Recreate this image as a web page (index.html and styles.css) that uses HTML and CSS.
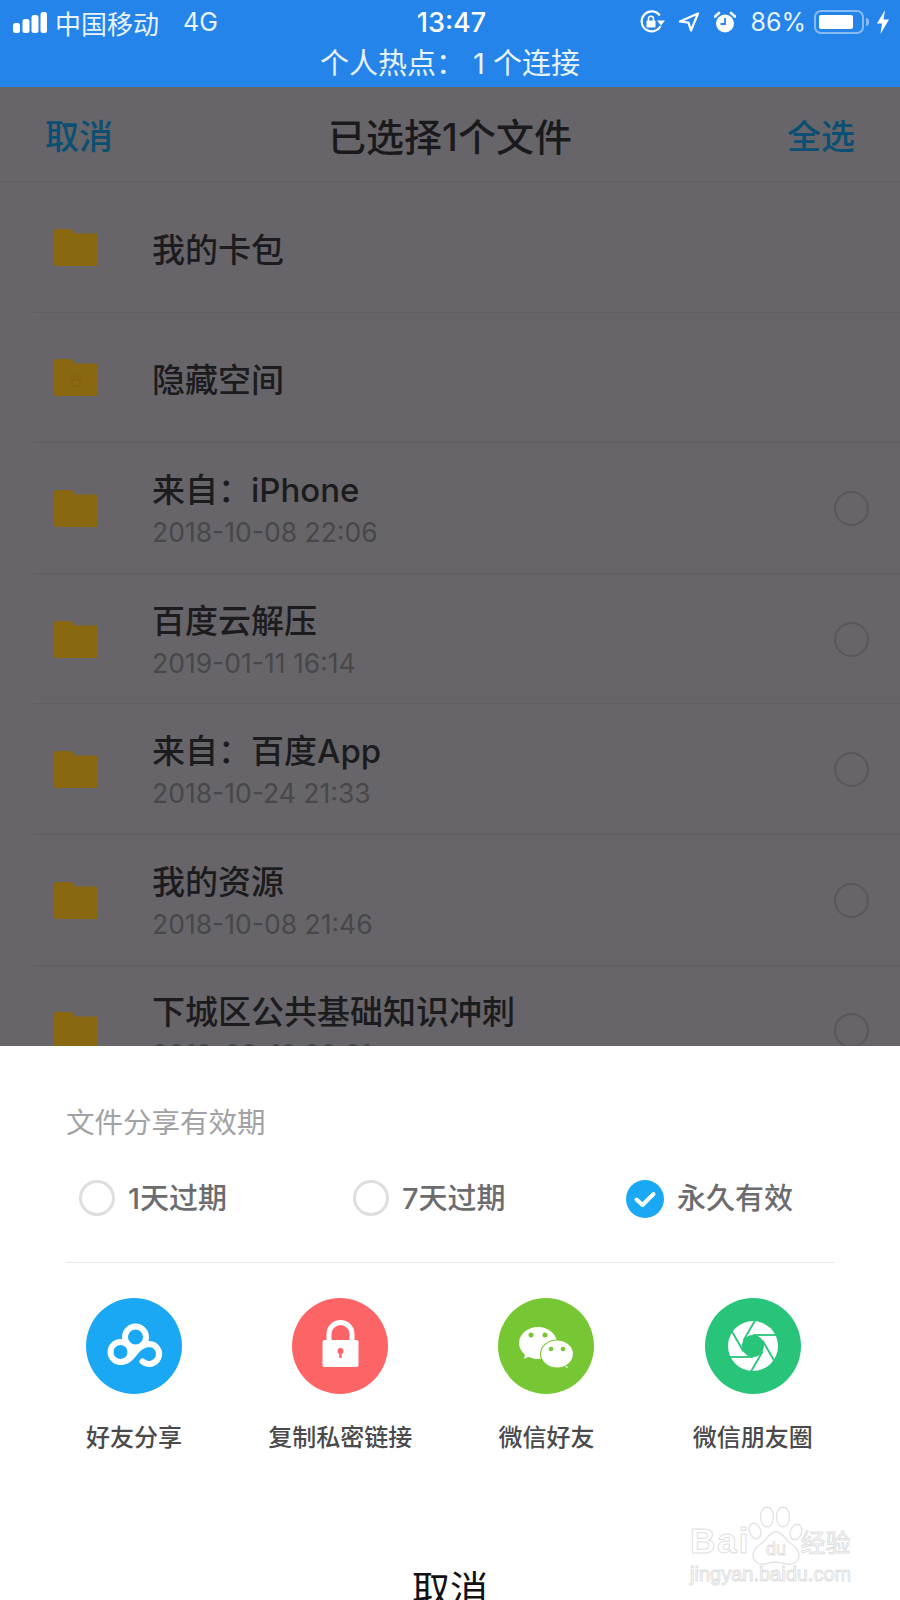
FILE: index.html
```html
<!DOCTYPE html>
<html lang="zh-CN">
<head>
  <meta charset="UTF-8" />
  <meta name="viewport" content="width=device-width, initial-scale=1.0"/>
  <title>已选择1个文件</title>
  <link rel="stylesheet" href="styles.css">
</head>
<body>
<div class="phone">
  <header class="topbar">
    <div class="status">
      <div class="status-left">
        <svg class="signal" width="34" height="22" viewBox="0 0 34 22"><rect x="0" y="12" width="7" height="10" rx="2.5"/><rect x="9.500" y="8" width="7" height="14" rx="2.500"/><rect x="18.500" y="4" width="7" height="18" rx="2.500"/><rect x="27.500" y="1" width="6.500" height="21" rx="2.500"/></svg>
        <span class="carrier">中国移动</span>
        <span class="net">4G</span>
      </div>
      <div class="clock">13:47</div>
      <div class="status-right">
        <svg class="ico-rot" width="27" height="24" viewBox="0 0 27 24"><path d="M20.800 5.500A10 10 0 1 0 21.500 16" fill="none" stroke="#fff" stroke-width="2.200"/><path d="M18 10.500h8l-4 5z" fill="#fff"/><rect x="7.500" y="10.500" width="9" height="7" rx="1" fill="#fff"/><path d="M9.500 11V8.800a2.500 2.500 0 0 1 5 0V11" fill="none" stroke="#fff" stroke-width="1.600"/></svg>
        <svg class="ico-loc" width="22" height="20" viewBox="0 0 22 20"><path d="M20 1.500 2 9.500l8.500 1.200L13 18.500z" fill="none" stroke="#fff" stroke-width="2.200" stroke-linejoin="round"/></svg>
        <svg class="ico-alarm" width="22" height="22" viewBox="0 0 22 22"><circle cx="11" cy="12.500" r="9" fill="#fff"/><path d="M1 5.500 5 2M21 5.500 17 2" stroke="#fff" stroke-width="2.600" stroke-linecap="round"/><path d="M11 7v6H6.500" fill="none" stroke="#2584ea" stroke-width="1.800"/></svg>
        <span class="pct">86%</span>
        <div class="battery"><div class="battery-fill"></div></div>
        <div class="battery-nub"></div>
        <svg class="ico-bolt" width="14" height="24" viewBox="0 0 14 24"><path d="M9 0 1 13.500h5L4.500 24 13 9.500H7.500z" fill="#fff"/></svg>
      </div>
    </div>
    <div class="hotspot">个人热点： 1 个连接</div>
  </header>

  <nav class="navbar">
    <span class="nav-link">取消</span>
    <span class="nav-title">已选择1个文件</span>
    <span class="nav-link">全选</span>
  </nav>

  <ul class="files">
    <li class="file">
      <svg class="folder" width="44" height="37" viewBox="0 0 44 37"><path d="M2 0h13c3 0 5 2 6 4.500h21a2 2 0 0 1 2 2V35a2 2 0 0 1-2 2H2a2 2 0 0 1-2-2V2a2 2 0 0 1 2-2z"/></svg>
      <div class="file-text"><div class="file-name">我的卡包</div></div>
    </li>
    <li class="file">
      <svg class="folder" width="44" height="37" viewBox="0 0 44 37"><path d="M2 0h13c3 0 5 2 6 4.500h21a2 2 0 0 1 2 2V35a2 2 0 0 1-2 2H2a2 2 0 0 1-2-2V2a2 2 0 0 1 2-2z"/><path d="M18 27v-6h8v6zM19.800 21v-2a2.200 2.200 0 0 1 4.400 0v2" fill="none" stroke="#85610f" stroke-width="1.600"/></svg>
      <div class="file-text"><div class="file-name">隐藏空间</div></div>
    </li>
    <li class="file">
      <svg class="folder" width="44" height="37" viewBox="0 0 44 37"><path d="M2 0h13c3 0 5 2 6 4.500h21a2 2 0 0 1 2 2V35a2 2 0 0 1-2 2H2a2 2 0 0 1-2-2V2a2 2 0 0 1 2-2z"/></svg>
      <div class="file-text"><div class="file-name">来自：iPhone</div><div class="file-date">2018-10-08 22:06</div></div>
      <div class="file-radio"></div>
    </li>
    <li class="file">
      <svg class="folder" width="44" height="37" viewBox="0 0 44 37"><path d="M2 0h13c3 0 5 2 6 4.500h21a2 2 0 0 1 2 2V35a2 2 0 0 1-2 2H2a2 2 0 0 1-2-2V2a2 2 0 0 1 2-2z"/></svg>
      <div class="file-text"><div class="file-name">百度云解压</div><div class="file-date">2019-01-11 16:14</div></div>
      <div class="file-radio"></div>
    </li>
    <li class="file">
      <svg class="folder" width="44" height="37" viewBox="0 0 44 37"><path d="M2 0h13c3 0 5 2 6 4.500h21a2 2 0 0 1 2 2V35a2 2 0 0 1-2 2H2a2 2 0 0 1-2-2V2a2 2 0 0 1 2-2z"/></svg>
      <div class="file-text"><div class="file-name">来自：百度App</div><div class="file-date">2018-10-24 21:33</div></div>
      <div class="file-radio"></div>
    </li>
    <li class="file">
      <svg class="folder" width="44" height="37" viewBox="0 0 44 37"><path d="M2 0h13c3 0 5 2 6 4.500h21a2 2 0 0 1 2 2V35a2 2 0 0 1-2 2H2a2 2 0 0 1-2-2V2a2 2 0 0 1 2-2z"/></svg>
      <div class="file-text"><div class="file-name">我的资源</div><div class="file-date">2018-10-08 21:46</div></div>
      <div class="file-radio"></div>
    </li>
    <li class="file">
      <svg class="folder" width="44" height="37" viewBox="0 0 44 37"><path d="M2 0h13c3 0 5 2 6 4.500h21a2 2 0 0 1 2 2V35a2 2 0 0 1-2 2H2a2 2 0 0 1-2-2V2a2 2 0 0 1 2-2z"/></svg>
      <div class="file-text"><div class="file-name">下城区公共基础知识冲刺</div><div class="file-date">2018-09-12 20:31</div></div>
      <div class="file-radio"></div>
    </li>
  </ul>

  <section class="sheet">
    <div class="sheet-title">文件分享有效期</div>
    <div class="options">
      <div class="option"><span class="opt-radio"></span><span>1天过期</span></div>
      <div class="option"><span class="opt-radio"></span><span>7天过期</span></div>
      <div class="option">
        <svg width="38" height="38" viewBox="0 0 38 38"><circle cx="19" cy="19" r="19" fill="#1aa7f4"/><path d="M10.500 19.500 16.500 25 27.500 14" fill="none" stroke="#fff" stroke-width="4" stroke-linecap="round" stroke-linejoin="round"/></svg>
        <span>永久有效</span>
      </div>
    </div>
    <div class="share">
      <div class="share-item">
        <svg width="96" height="96" viewBox="0 0 96 96"><circle cx="48" cy="48" r="48" fill="#1aa7f4"/><g fill="none" stroke="#fff" stroke-width="6"><circle cx="49.500" cy="39" r="10.500"/><circle cx="34.500" cy="54" r="10"/><path d="M34.500 64c8 0 11-5 15-10s8-8 14-8a10 10 0 1 1-7 17.500" stroke-linecap="round"/></g></svg>
        <span>好友分享</span>
      </div>
      <div class="share-item">
        <svg width="96" height="96" viewBox="0 0 96 96"><circle cx="48" cy="48" r="48" fill="#fd6465"/><rect x="30.500" y="42" width="36" height="27" rx="2" fill="#fff"/><path d="M37 43V36a11.500 11.500 0 0 1 23 0v7" fill="none" stroke="#fff" stroke-width="5"/><circle cx="48.500" cy="53" r="3" fill="#fd6465"/><rect x="47.300" y="54" width="2.400" height="6" fill="#fd6465"/></svg>
        <span>复制私密链接</span>
      </div>
      <div class="share-item">
        <svg width="96" height="96" viewBox="0 0 96 96"><circle cx="48" cy="48" r="48" fill="#76c733"/><path d="M28 52 26 61l10-5z" fill="#fff"/><ellipse cx="40" cy="45" rx="19" ry="16" fill="#fff"/><circle cx="33" cy="37" r="2.500" fill="#76c733"/><circle cx="47" cy="37" r="2.500" fill="#76c733"/><path d="M66 62l4 8-10-4z" fill="#fff"/><ellipse cx="59" cy="56" rx="16.500" ry="14" fill="#fff" stroke="#76c733" stroke-width="1.200"/><circle cx="53" cy="51" r="2.300" fill="#76c733"/><circle cx="65" cy="51" r="2.300" fill="#76c733"/></svg>
        <span>微信好友</span>
      </div>
      <div class="share-item">
        <svg width="96" height="96" viewBox="0 0 96 96"><circle cx="48" cy="48" r="48" fill="#27c47a"/><circle cx="48" cy="48" r="25" fill="#fff"/><g stroke="#27c47a" stroke-width="1.800"><path d="M48 37h28"/><path d="M48 37h28" transform="rotate(60 48 48)"/><path d="M48 37h28" transform="rotate(120 48 48)"/><path d="M48 37h28" transform="rotate(180 48 48)"/><path d="M48 37h28" transform="rotate(240 48 48)"/><path d="M48 37h28" transform="rotate(300 48 48)"/></g><circle cx="48" cy="48" r="11" fill="#27c47a"/></svg>
        <span>微信朋友圈</span>
      </div>
    </div>
    <div class="sheet-cancel">取消</div>
  </section>

  <div class="watermark">
    <div class="wm-top">
      <span class="wm-bai">Bai</span>
      <svg class="wm-paw" width="56" height="62" viewBox="0 0 56 62"><g fill="#fff" stroke="#e4e4e4" stroke-width="1.400"><ellipse cx="7" cy="26" rx="5.500" ry="8" transform="rotate(-20 7 26)"/><ellipse cx="19" cy="12" rx="6.500" ry="10"/><ellipse cx="35" cy="12" rx="6.500" ry="10"/><ellipse cx="48" cy="27" rx="5.500" ry="8" transform="rotate(20 48 27)"/><path d="M28 27c-7 0-8 7-14 11-6 4-9 7-9 12 0 7 6 10 12 9 5-1 7-2 11-2s7 1 11 2c6 1 12-2 12-9 0-5-3-8-9-12-6-4-7-11-14-11z"/></g><text x="28" y="50" text-anchor="middle" class="wm-du">du</text></svg>
      <span class="wm-cn">经验</span>
    </div>
    <div class="wm-url">jingyan.baidu.com</div>
  </div>
</div>
</body>
</html>
```

FILE: styles.css
```css
* {
  box-sizing: border-box;
}

body {
  margin: 0;
  background: #676569;
  font-family: Inter, "Noto Sans CJK SC", sans-serif;
}

.phone {
  position: relative;
  width: 900px;
  height: 1600px;
  overflow: hidden;
  background: #676569;
}

/* blue status area */
.topbar {
  height: 87px;
  background: #2584ea;
  color: #e9f3fe;
}

.status {
  display: grid;
  grid-template-columns: 1fr auto 1fr;
  align-items: center;
  height: 42px;
  padding: 2px 10px 0 13px;
  font-size: 26px;
}

.status-left,
.status-right {
  display: flex;
  align-items: center;
}

.status-right {
  justify-content: flex-end;
}

.signal {
  fill: #fff;
  margin-right: 8px;
}

.net {
  margin-left: 24px;
  font-size: 25px;
}

.clock {
  font-weight: 500;
  color: #fff;
  font-size: 27px;
}

.ico-loc {
  margin-left: 12px;
}

.ico-alarm {
  margin-left: 14px;
}

.pct {
  margin-left: 14px;
  font-size: 25px;
}

.battery {
  width: 50px;
  height: 24px;
  margin-left: 8px;
  padding: 3px;
  border: 2px solid rgba(255, 255, 255, 0.45);
  border-radius: 7px;
}

.battery-fill {
  width: 86%;
  height: 100%;
  background: #fff;
  border-radius: 2px;
}

.battery-nub {
  width: 3px;
  height: 8px;
  margin-left: 2px;
  background: rgba(255, 255, 255, 0.45);
  border-radius: 0 3px 3px 0;
}

.ico-bolt {
  margin-left: 7px;
}

.hotspot {
  margin-top: 5px;
  text-align: center;
  font-size: 29px;
  line-height: 34px;
}

/* nav */
.navbar {
  display: flex;
  align-items: center;
  justify-content: space-between;
  height: 95px;
  padding: 0 45px;
  border-bottom: 1px solid #625f64;
}

.nav-link {
  font-size: 34px;
  font-weight: 500;
  color: #0b4f72;
}

.nav-title {
  font-size: 38px;
  font-weight: 500;
  color: #1a1a1c;
}

/* file list */
.files {
  list-style: none;
  margin: 0;
  padding: 0;
}

.file {
  position: relative;
  display: flex;
  align-items: center;
  height: 130.6px;
  padding: 0 31px 0 54px;
}

.file::after {
  content: "";
  position: absolute;
  left: 33px;
  right: 0;
  bottom: 0;
  height: 1px;
  background: #605e62;
}

.folder {
  flex: none;
  fill: #8a6812;
}

.file-text {
  flex: 1;
  margin-top: 5px;
  margin-left: 54px;
}

.file-name {
  font-size: 33px;
  font-weight: 500;
  line-height: 42px;
  color: #1c1c1f;
}

.file-date {
  font-size: 26.5px;
  line-height: 42px;
  color: #484749;
}

.file-radio {
  flex: none;
  width: 35px;
  height: 35px;
  border: 2.5px solid #59575b;
  border-radius: 50%;
}

/* bottom sheet */
.sheet {
  position: absolute;
  left: 0;
  right: 0;
  top: 1046px;
  height: 554px;
  padding: 57px 66px 0;
  overflow: hidden;
  background: #fff;
}

.sheet-title {
  font-size: 28.5px;
  line-height: 40px;
  color: #a2a2a5;
}

.options {
  display: grid;
  grid-template-columns: 274px 273px 1fr;
  height: 120px;
  padding: 37px 0 0 13px;
  border-bottom: 1px solid #e8e8e8;
  font-size: 29px;
  font-weight: 500;
  color: #6c6c6f;
}

.option {
  display: flex;
  align-items: flex-start;
  gap: 13px;
  line-height: 38px;
}

.opt-radio {
  flex: none;
  width: 36px;
  height: 36px;
  border: 3px solid #dedede;
  border-radius: 50%;
}

.share {
  display: grid;
  grid-template-columns: repeat(4, 206.2px);
  margin: 35px -35px 0;
}

.share-item {
  display: flex;
  flex-direction: column;
  align-items: center;
  gap: 27px;
  font-size: 24px;
  font-weight: 500;
  line-height: 34px;
  color: #4a4a4c;
}

.sheet-cancel {
  margin-top: 109px;
  text-align: center;
  font-size: 38px;
  line-height: 50px;
  color: #111;
}

/* watermark sits over the sheet corner */
.watermark {
  position: absolute;
  left: 690px;
  top: 1503px;
  width: 164px;
  color: transparent;
  -webkit-text-stroke: 1px #dfdfdf;
}

.wm-top {
  display: flex;
  align-items: flex-end;
  height: 58px;
}

.wm-bai {
  flex: none;
  font-family: "Liberation Sans", sans-serif;
  font-size: 35px;
  line-height: 40px;
  letter-spacing: 2px;
  font-weight: 700;
}

.wm-paw {
  flex: none;
  margin: 0 0 -6px -2px;
}

.wm-du {
  font-family: "Liberation Sans", sans-serif;
  font-size: 18px;
  fill: #fff;
  stroke: #dcdcdc;
  stroke-width: 0.8;
}

.wm-cn {
  flex: none;
  margin-left: -4px;
  font-size: 25px;
  line-height: 36px;
  white-space: nowrap;
}

.wm-url {
  margin-top: 2px;
  font-family: "Liberation Sans", sans-serif;
  font-size: 20px;
  line-height: 22px;
  white-space: nowrap;
}
```
